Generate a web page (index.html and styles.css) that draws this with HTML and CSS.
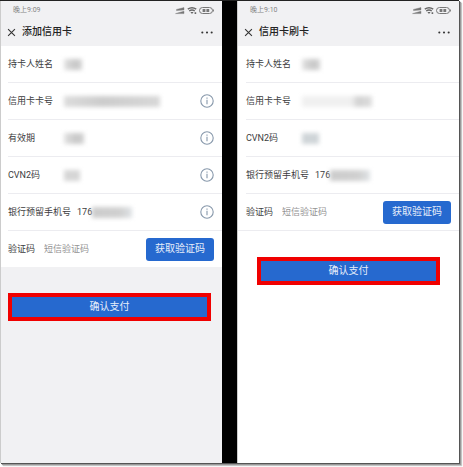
FILE: index.html
```html
<!DOCTYPE html>
<html lang="zh-CN">
<head>
    <meta charset="UTF-8">
    <meta name="viewport" content="width=device-width, initial-scale=1.0">
    <title>信用卡支付</title>
    <link rel="stylesheet" href="styles.css">
</head>
<body>
    <!-- Shared icons -->
    <svg class="sprite" aria-hidden="true">
        <symbol id="icon-status" viewBox="0 0 40 9">
            <path d="M2.5 3.4 10 1.6v2.3L2.5 4.6zM1.5 7.6 10 5.2v2.4z" fill="#777" stroke="#777" stroke-width=".4"/>
            <path d="M13.8 3.2q4.2-3 8.4 0" fill="none" stroke="#666" stroke-width="1.5"/>
            <path d="M15.2 5q2.8-2 5.6 0" fill="none" stroke="#666" stroke-width="1.3"/>
            <path d="M16.4 6.1h3.2L18 8zM20.6 6.3h1.6v1.6h-1.6z" fill="#666"/>
            <rect x="25.5" y="1.5" width="13" height="6" rx="3" fill="none" stroke="#777" stroke-width="1"/>
            <path d="M28.6 3h2.8v3h-2.8zM32.4 3h2.8v3h-2.8zM39 3.6h.9v2H39z" fill="#777"/>
        </symbol>
        <symbol id="icon-close" viewBox="0 0 10 10">
            <path d="M1.2 1.2l7.6 7.6M8.8 1.2L1.2 8.8" fill="none" stroke="#333" stroke-width="1.2"/>
        </symbol>
        <symbol id="icon-more" viewBox="0 0 12 4">
            <circle cx="2" cy="2" r=".9" fill="#333"/>
            <circle cx="6" cy="2" r=".9" fill="#333"/>
            <circle cx="10" cy="2" r=".9" fill="#333"/>
        </symbol>
        <symbol id="icon-info" viewBox="0 0 14 14">
            <circle cx="7" cy="7" r="6.2" fill="none" stroke="#8798ab" stroke-width="1.1"/>
            <path d="M7 5.8v4.4M7 3.6v1.2" fill="none" stroke="#8798ab" stroke-width="1.1"/>
        </symbol>
    </svg>

    <div class="screens">
        <section class="screen screen-add">
            <header class="header">
                <div class="status-bar">
                    <span>晚上9:09</span>
                    <svg class="status-icons" aria-hidden="true"><use href="#icon-status"/></svg>
                </div>
                <div class="nav-bar">
                    <button type="button" class="icon-btn" aria-label="关闭"><svg class="close"><use href="#icon-close"/></svg></button>
                    <h1>添加信用卡</h1>
                    <button type="button" class="icon-btn" aria-label="更多"><svg class="more"><use href="#icon-more"/></svg></button>
                </div>
            </header>
            <form>
                <div class="fields">
                    <div class="row">
                        <span class="label">持卡人姓名</span>
                        <span class="mask mask-name"></span>
                    </div>
                    <div class="row">
                        <span class="label">信用卡卡号</span>
                        <span class="mask mask-card"></span>
                        <button type="button" class="icon-btn info-btn" aria-label="卡号说明"><svg class="info"><use href="#icon-info"/></svg></button>
                    </div>
                    <div class="row">
                        <span class="label">有效期</span>
                        <span class="mask mask-date"></span>
                        <button type="button" class="icon-btn info-btn" aria-label="有效期说明"><svg class="info"><use href="#icon-info"/></svg></button>
                    </div>
                    <div class="row">
                        <span class="label">CVN2码</span>
                        <span class="mask mask-cvn"></span>
                        <button type="button" class="icon-btn info-btn" aria-label="CVN2码说明"><svg class="info"><use href="#icon-info"/></svg></button>
                    </div>
                    <div class="row">
                        <span class="label label-phone">银行预留手机号</span>
                        <span class="phone">176</span>
                        <span class="mask mask-phone"></span>
                        <button type="button" class="icon-btn info-btn" aria-label="手机号说明"><svg class="info"><use href="#icon-info"/></svg></button>
                    </div>
                    <div class="row">
                        <label class="label label-code" for="code-add">验证码</label>
                        <input type="text" id="code-add" placeholder="短信验证码">
                        <button type="button" class="code-btn">获取验证码</button>
                    </div>
                </div>
                <button type="submit" class="pay-btn">确认支付</button>
            </form>
        </section>

        <section class="screen screen-pay">
            <header class="header">
                <div class="status-bar">
                    <span>晚上9:10</span>
                    <svg class="status-icons" aria-hidden="true"><use href="#icon-status"/></svg>
                </div>
                <div class="nav-bar">
                    <button type="button" class="icon-btn" aria-label="关闭"><svg class="close"><use href="#icon-close"/></svg></button>
                    <h1>信用卡刷卡</h1>
                    <button type="button" class="icon-btn" aria-label="更多"><svg class="more"><use href="#icon-more"/></svg></button>
                </div>
            </header>
            <form>
                <div class="fields">
                    <div class="row">
                        <span class="label">持卡人姓名</span>
                        <span class="mask mask-name"></span>
                    </div>
                    <div class="row">
                        <span class="label">信用卡卡号</span>
                        <span class="mask mask-saved"></span>
                    </div>
                    <div class="row">
                        <span class="label">CVN2码</span>
                        <span class="mask mask-cvn-saved"></span>
                    </div>
                    <div class="row">
                        <span class="label label-phone">银行预留手机号</span>
                        <span class="phone">176</span>
                        <span class="mask mask-phone"></span>
                    </div>
                    <div class="row">
                        <label class="label label-code" for="code-pay">验证码</label>
                        <input type="text" id="code-pay" placeholder="短信验证码">
                        <button type="button" class="code-btn">获取验证码</button>
                    </div>
                </div>
                <button type="submit" class="pay-btn">确认支付</button>
            </form>
        </section>
    </div>
</body>
</html>
```
FILE: styles.css
```css
* {
    margin: 0;
    padding: 0;
    box-sizing: border-box;
    font-family: Roboto, "Noto Sans CJK SC", sans-serif;
}

body {
    display: flex;
    min-height: 100vh;
    padding: 0 4px 4px 0;
    background-color: #fff;
    color: #3c3c3e;
    font-size: 9px;
    line-height: 14px;
}

button, input {
    border: none;
    background: none;
    color: inherit;
    font-size: inherit;
    line-height: inherit;
}

button {
    cursor: pointer;
}

svg {
    display: block;
}

.sprite {
    position: absolute;
    width: 0;
    height: 0;
}

.screens {
    flex: 1;
    display: grid;
    grid-template-columns: repeat(2, minmax(0, 1fr));
    gap: 15px;
    border-top: 1px solid #222;
    background-color: #000;
    box-shadow: 1px 1px 0 #555, 2px 2px 1px #999, 3px 3px 1px #ccc;
}

.screen {
    border-left: 1px solid #ccc;
    background-color: #fff;
}

.screen-add {
    background-color: #f1f1f3;
}

/* Header */
.header {
    padding: 2px 8px 0 6px;
    height: 45px;
    background-color: #f1f1f3;
}

.status-bar {
    display: flex;
    justify-content: space-between;
    align-items: center;
    padding-left: 6px;
    color: #858585;
    font-size: 7px;
}

.status-icons {
    width: 40px;
    height: 9px;
}

.nav-bar {
    display: flex;
    align-items: center;
    padding-top: 8px;
}

.nav-bar h1 {
    flex: 1;
    padding-left: 6px;
    color: #222;
    font-size: 10px;
    font-weight: 500;
}

.close {
    width: 9px;
    height: 9px;
}

.more {
    width: 14px;
    height: 5px;
}

/* Form rows */
.fields {
    padding-left: 7px;
    background-color: #fff;
}

.row {
    display: flex;
    align-items: center;
    height: 37px;
    padding-right: 8px;
    border-bottom: 1px solid #ececf0;
}

.screen-add .row:last-child {
    height: 36px;
    border-bottom: none;
}

.screen-pay .fields {
    padding-left: 0;
    border-bottom: 1px solid #ececf0;
}

.screen-pay .row {
    margin-left: 8px;
}

.screen-pay .row:last-child {
    height: 36px;
    border-bottom: none;
}

.label {
    width: 56px;
}

.label-phone {
    width: auto;
    margin-right: 6px;
}

.label-code {
    width: 36px;
}

.row input {
    flex: 1;
    min-width: 0;
    outline: none;
}

.row input::placeholder {
    color: #929292;
    opacity: 1;
}

.info-btn {
    margin-left: auto;
}

.info {
    width: 14px;
    height: 14px;
}

/* Hidden personal data */
.mask {
    height: 11px;
    background: linear-gradient(90deg, #e2e2e2, #c8c8c8 60%, #d2d2d2);
    filter: blur(2px);
}

.mask-name {
    width: 18px;
}

.mask-card {
    width: 96px;
    background: linear-gradient(90deg, #dcdcdc, #ccc 40%, #d8d8d8);
}

.mask-date {
    width: 20px;
}

.mask-cvn {
    width: 16px;
    background: #d6d6d6;
}

.mask-cvn-saved {
    width: 17px;
    background: #cfd5d8;
}

.mask-saved {
    width: 70px;
    background: linear-gradient(90deg, #f0f0f0 70%, #d2d2d2 80%, #dedede);
}

.mask-phone {
    width: 40px;
    background: linear-gradient(90deg, #ccc, #d0d0d0 70%, #dfe3e6);
}

/* Buttons */
.code-btn {
    width: 68px;
    height: 23px;
    border-radius: 3px;
    background-color: #2669cf;
    color: #e6eefa;
    font-size: 10px;
}

.pay-btn {
    display: block;
    width: calc(100% - 18px);
    height: 28px;
    margin: 26px 11px 0 7px;
    border: 4px solid #f00000;
    background-color: #2669cf;
    color: #e6eefa;
    font-size: 10px;
}

.screen-pay .pay-btn {
    width: calc(100% - 38px);
    margin: 26px 19px 0;
}
```
